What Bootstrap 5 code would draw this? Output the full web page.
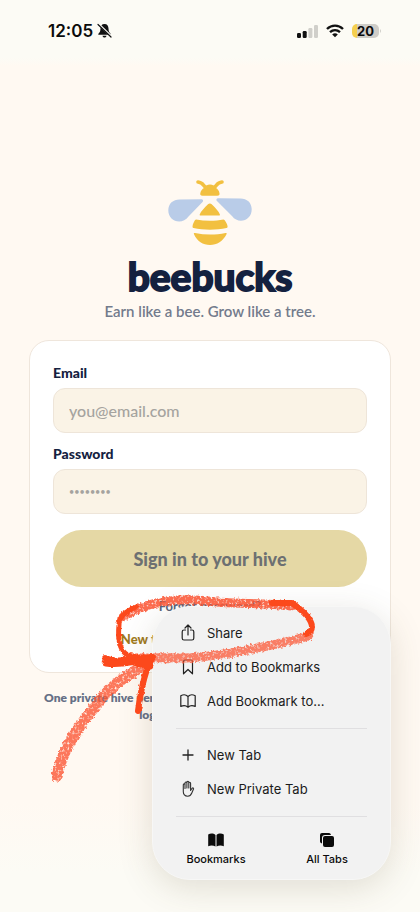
<!DOCTYPE html>
<html lang="en">
<head>
<meta charset="utf-8">
<meta name="viewport" content="width=device-width, initial-scale=1">
<title>beebucks – Sign in</title>
<link href="https://cdn.jsdelivr.net/npm/bootstrap@5.3.0/dist/css/bootstrap.min.css" rel="stylesheet">
<style>
  :root { --navy: #14213f; --slate: #737b8c; --line: #efe6dc; --cream: #faf3e6; }
  body { background: #fff9f2; color: var(--navy); font-family: Lato, "Open Sans", sans-serif; }
  .screen { background: linear-gradient(#fcfbf5 0, #fcfbf5 58px, #fff9f2 66px, #fff9f2 calc(100% - 110px), #fcfbf5 calc(100% - 40px)); overflow: hidden; }
  .status { height: 62px; padding: 0 38px 0 48px; color: #0b0b0b; font-family: Inter, sans-serif; }
  .clock { font-size: 17px; font-weight: 600; line-height: 20px; }
  .battery { width: 27px; height: 14px; border-radius: 5px; font-size: 13px; font-weight: 700; line-height: 14px; background: linear-gradient(90deg, #f5cf4f 20%, #cfcdc8 20%); }
  .brand { margin-top: 117px; }
  .wordmark { font: 700 39px/49px Lato, sans-serif; -webkit-text-stroke: 2px var(--navy); stroke-linejoin: round; margin-top: 6px; }
  .tagline { font-size: 15px; line-height: 20px; color: var(--slate); font-weight: 600; }
  .signin { margin: 19px 29px 0; padding: 22px 23px 23px; border: 1px solid var(--line); border-radius: 20px; }
  .signin label { font-size: 14px; font-weight: 900; line-height: 20px; margin-bottom: 5px; }
  .signin .form-control { height: 45px; padding: 0 15px; font-size: 16px; background: var(--cream); border-color: #eee5d9; border-radius: 12px; }
  .signin .form-control::placeholder { color: #a5a39f; opacity: 1; font-weight: 500; }
  .signin .form-control[type=password] { font-size: 9px; }
  .field { margin-bottom: 11px; }
  .hive { height: 57px; background: #e5d8a5; color: #6d7072; font: 900 18px/24px Lato, sans-serif; margin-top: 5px; }
  .forgot { font-size: 13px; line-height: 20px; color: #59647b; font-weight: 700; margin-top: 9px; }
  .join { font-size: 13px; line-height: 20px; color: #a07a1d; font-weight: 900; margin-top: 13px; }
  .fine { font-size: 12px; line-height: 17px; color: #667086; font-weight: 800; margin: 16px 28px 0; }
  .sheet { right: 29px; bottom: 32px; width: 239px; padding: 9px 23px 13px; border-radius: 38px; background: #f2f2f2; border: 1px solid #f7f7f6; box-shadow: 0 8px 34px rgba(90, 75, 45, .17); font-family: Inter, sans-serif; color: #1b1b1b; }
  .sheet button { background: none; border: 0; color: inherit; padding: 0; }
  .sheet .entry { height: 34px; gap: 7px; font-size: 13px; line-height: 18px; }
  .entry svg { width: 24px; height: 20px; flex: none; }
  .sheet hr { margin: 10px 0 9px; border-color: #e0dfe1; opacity: 1; }
  .sheet .tabbtn { font-size: 11px; line-height: 14px; font-weight: 500; color: #0b0b0b; width: 80px; padding-top: 6px; }
  .scribble { left: 40px; bottom: 122px; width: 290px; height: 200px; pointer-events: none; }
</style>
<script src="https://cdn.jsdelivr.net/npm/bootstrap@5.3.0/dist/js/bootstrap.bundle.min.js"></script>
</head>
<body>
<div class="screen position-relative min-vh-100 d-flex flex-column">
  <header class="status d-flex align-items-center justify-content-between">
    <div class="d-flex align-items-center gap-1">
      <span class="clock">12:05</span>
      <svg width="15" height="16" viewBox="0 0 15 16" aria-label="Silent"><path d="M7.500 1C4.800 1 3.600 3 3.500 5.500 3.400 8.200 3 9 1.600 10.500c-.6.7-.4 1.300.4 1.300h11c.8 0 1-.6.4-1.300C12 9 11.600 8.200 11.500 5.500 11.400 3 10.200 1 7.500 1zM5.500 12.700h4c-.2 2.400-3.800 2.400-4 0z" fill="#111"/><path d="M2 1.500l12 11.500" stroke="#fcfbf5" stroke-width="2"/><path d="M1 1.500l13 12.500" stroke="#111" stroke-width="1.200" stroke-linecap="round"/></svg>
    </div>
    <div class="d-flex align-items-center gap-2">
      <svg width="21" height="14" viewBox="0 0 21 14" aria-label="Signal"><rect y="9" width="4" height="5" rx="1.200" fill="#111"/><rect x="5.700" y="7" width="4" height="7" rx="1.200" fill="#111"/><rect x="11.400" y="4" width="4" height="10" rx="1.200" fill="#d0cfca"/><rect x="17" y="1" width="4" height="13" rx="1.200" fill="#d0cfca"/></svg>
      <svg width="18" height="14" viewBox="0 0 18 14" aria-label="Wi-Fi" fill="none" stroke="#111" stroke-width="2.400"><path d="M1 5c4.600-4.500 11.400-4.500 16 0M4 8.200c3-2.700 7-2.700 10 0"/><path d="M6.200 10.400c1.700-1.400 3.900-1.400 5.600 0L9 13.300z" fill="#111" stroke="none"/></svg>
      <div class="d-flex align-items-center">
        <div class="battery text-center">20</div>
        <svg width="3" height="6" viewBox="0 0 3 6" aria-hidden="true"><path d="M1 1q2 2 0 4z" fill="#cfcdc8"/></svg>
      </div>
    </div>
  </header>

  <main>
    <div class="brand text-center">
      <svg class="d-block mx-auto" width="84" height="67" viewBox="0 0 84 67" aria-hidden="true">
        <g fill="#f2c040"><path d="M34.500 16.800c-2 0-2.500-1-2.200-2.500.6-3 2-4.300 3.700-5.300 1.600-4.800 10.400-4.800 12 0 1.500 1 3 2.300 3.500 5.300.2 1.500-.2 2.500-2.300 2.500z"/><path d="M40 25.300c1-1.200 2.700-1.200 3.700 0 4 4 7 7 8.200 10.200.2.600-.1 1-.8 1H32.500c-.7 0-1-.4-.8-1 1.300-3.200 4.300-6.200 8.300-10.200z"/><path d="M28 40.500c9 1.700 19 1.700 27.500 0 1 0 3.500 3.500 4 6.500.2 1 .1 1.600-1 2-10 2.200-23 2.200-33 0-1-.3-1.100-1-.9-2 .5-3 2.400-6.500 3.400-6.500z"/><path d="M27 54c10 2 20.500 2 30.500 0 1-.2 1.400.3 1 1.200C55 62 49 66 42 66s-13-4-16-10.800c-.4-.9 0-1.400 1-1.200z"/></g>
        <path d="M38 8.500C35 7 35.500 3.500 30 3M46 8.500C49 7 48.500 3.500 54 3" fill="none" stroke="#f2c040" stroke-width="3.600" stroke-linecap="round"/>
        <g fill="#b9cce8"><path d="M11.500 20.500 33 20.300c2 0 2.800 1.600 1.300 3L20.500 37.500C14 46.500 0 42.500.3 31 .5 24.500 5 20.600 11.500 20.500z"/><path d="M72.500 19.500 50.500 19.300c-2 0-2.800 1.600-1.300 3L64 37c6.500 9 20 4.500 19.700-7C83.500 23.500 79 19.600 72.500 19.500z"/></g>
      </svg>
      <h1 class="wordmark mb-0">beebucks</h1>
      <p class="tagline mb-0">Earn like a bee. Grow like a tree.</p>
    </div>

    <form class="signin bg-white">
      <div class="field">
        <label class="d-block" for="email">Email</label>
        <input class="form-control" id="email" type="email" placeholder="you@email.com">
      </div>
      <div class="field">
        <label class="d-block" for="password">Password</label>
        <input class="form-control" id="password" type="password" placeholder="••••••••">
      </div>
      <button class="hive btn border-0 rounded-pill w-100" type="button">Sign in to your hive</button>
      <div class="forgot text-center"><a class="text-reset text-decoration-none" href="#">Forgot password?</a></div>
      <div class="join text-center"><a class="text-reset text-decoration-none" href="#">New to beebucks? Join us here</a></div>
    </form>
    <p class="fine text-center">One private hive per family. Keep your details safe and always<br>login with your own email.</p>
  </main>

  <nav class="sheet position-absolute" aria-label="Tab menu">
    <button class="entry d-flex align-items-center w-100" type="button">
      <svg viewBox="0 0 24 20" fill="none" stroke="#222" stroke-width="1.200" stroke-linecap="round" stroke-linejoin="round"><path d="M9.500 7H8q-1.800 0-1.800 1.800v6.400Q6.200 17 8 17h8q1.800 0 1.800-1.800V8.800Q17.800 7 16 7h-1.500M12 12V2.500M9 5l3-3 3 3"/></svg>Share</button>
    <button class="entry d-flex align-items-center w-100" type="button">
      <svg viewBox="0 0 24 20" fill="none" stroke="#222" stroke-width="1.200" stroke-linejoin="round"><path d="M7.500 16.800V4.500Q7.500 3 9 3h6q1.500 0 1.500 1.500v12.300L12 12.500z"/></svg>Add to Bookmarks</button>
    <button class="entry d-flex align-items-center w-100" type="button">
      <svg viewBox="0 0 24 20" fill="none" stroke="#222" stroke-width="1.200" stroke-linejoin="round"><path d="M12 5.500C10 3.500 7 3.500 4.800 4.800v10.700c2.200-1 5.200-1 7.200.7 2-1.700 5-1.700 7.200-.7V4.800C17 3.500 14 3.500 12 5.500zM12 5.500v10.700"/></svg>Add Bookmark to...</button>
    <hr>
    <button class="entry d-flex align-items-center w-100" type="button">
      <svg viewBox="0 0 24 20" fill="none" stroke="#222" stroke-width="1.300" stroke-linecap="round"><path d="M12 5v10M7 10h10"/></svg>New Tab</button>
    <button class="entry d-flex align-items-center w-100" type="button">
      <svg viewBox="0 0 24 20" fill="none" stroke="#333" stroke-width="1.100" stroke-linecap="round" stroke-linejoin="round"><path d="M7.300 11V5.800c0-1.300 1.700-1.300 1.700 0V9.500M9 9V4c0-1.300 1.900-1.300 1.900 0v5M10.900 9V3.300c0-1.300 1.900-1.300 1.900 0V9M12.800 9V4.200c0-1.300 1.800-1.300 1.800 0v7.300l1.500-2.200c.7-.9 1.800-.4 1.400.7l-1.700 4c-.8 2-2.200 3.200-4.100 3.200-3 0-4.400-2-4.400-4.500V11"/></svg>New Private Tab</button>
    <hr>
    <div class="d-flex justify-content-between">
      <button class="tabbtn" type="button"><svg class="d-block mx-auto mb-1" width="18" height="16" viewBox="0 0 18 16"><path d="M8.500 3C6.500 1.300 3.500 1.200 1.200 2.500v11.700c2.300-1 5.200-.9 7.300.3zM9.500 3c2-1.700 5-1.800 7.300-.5v11.700c-2.300-1-5.200-.9-7.300.3z" fill="#0b0b0b"/></svg>Bookmarks</button>
      <button class="tabbtn" type="button"><svg class="d-block mx-auto mb-1" width="18" height="16" viewBox="0 0 18 16"><path d="M2 3Q2 1 4 1h7q1.500 0 2 2H7Q4 3 4 6v5.500Q2 11 2 9.500z" fill="#0b0b0b"/><rect x="5" y="4" width="11" height="11" rx="2" fill="#0b0b0b"/></svg>All Tabs</button>
    </div>
  </nav>

  <svg class="scribble position-absolute" viewBox="40 590 290 200" aria-hidden="true">
    <defs>
      <filter id="crayon" x="-10%" y="-10%" width="120%" height="120%">
        <feTurbulence type="fractalNoise" baseFrequency=".4" numOctaves="2" seed="4" result="n"/>
        <feDisplacementMap in="SourceGraphic" in2="n" scale="5" xChannelSelector="R" yChannelSelector="G" result="d"/>
        <feColorMatrix in="n" type="matrix" values="0 0 0 0 0  0 0 0 0 0  0 0 0 0 0  0 0 0 3 -.4" result="m"/>
        <feComposite in="d" in2="m" operator="in"/>
      </filter>
      <filter id="wax" x="-10%" y="-10%" width="120%" height="120%">
        <feTurbulence type="fractalNoise" baseFrequency=".3" numOctaves="2" seed="9" result="n"/>
        <feDisplacementMap in="SourceGraphic" in2="n" scale="3" xChannelSelector="R" yChannelSelector="G"/>
      </filter>
    </defs>
    <g fill="none" stroke="#fb5534" stroke-linecap="round" stroke-linejoin="round">
      <g filter="url(#crayon)">
        <path d="M123 617c20-13 48-20 84-16 20 3 60 2 85 5" stroke-width="9" opacity=".88"/>
        <path d="M309 636c-40 11-90 20-122 22-20 0-36-1-50 1" stroke-width="9" opacity=".75"/>
        <path d="M57 776c5-26 22-50 36-67 14-20 30-32 54-45" stroke-width="11" opacity=".8"/>
      </g>
      <g filter="url(#wax)" stroke="#fc481c">
        <path d="M136 607c-10 4-17 9-17 18-1 10-1 23 7 29 5 3 12 3 20 4" stroke-width="5"/>
        <path d="M272 603h20c7 5 19 15 20 23 0 4-2 7-6 8" stroke-width="6"/>
        <path d="M105 658c14 6 30-1 48-1-8 12-12 32-15 54" stroke-width="6"/>
        <path d="M106 663c18 3 30-4 42-3M134 662l16 4" stroke-width="7"/>
      </g>
    </g>
  </svg>
</div>
</body>
</html>
